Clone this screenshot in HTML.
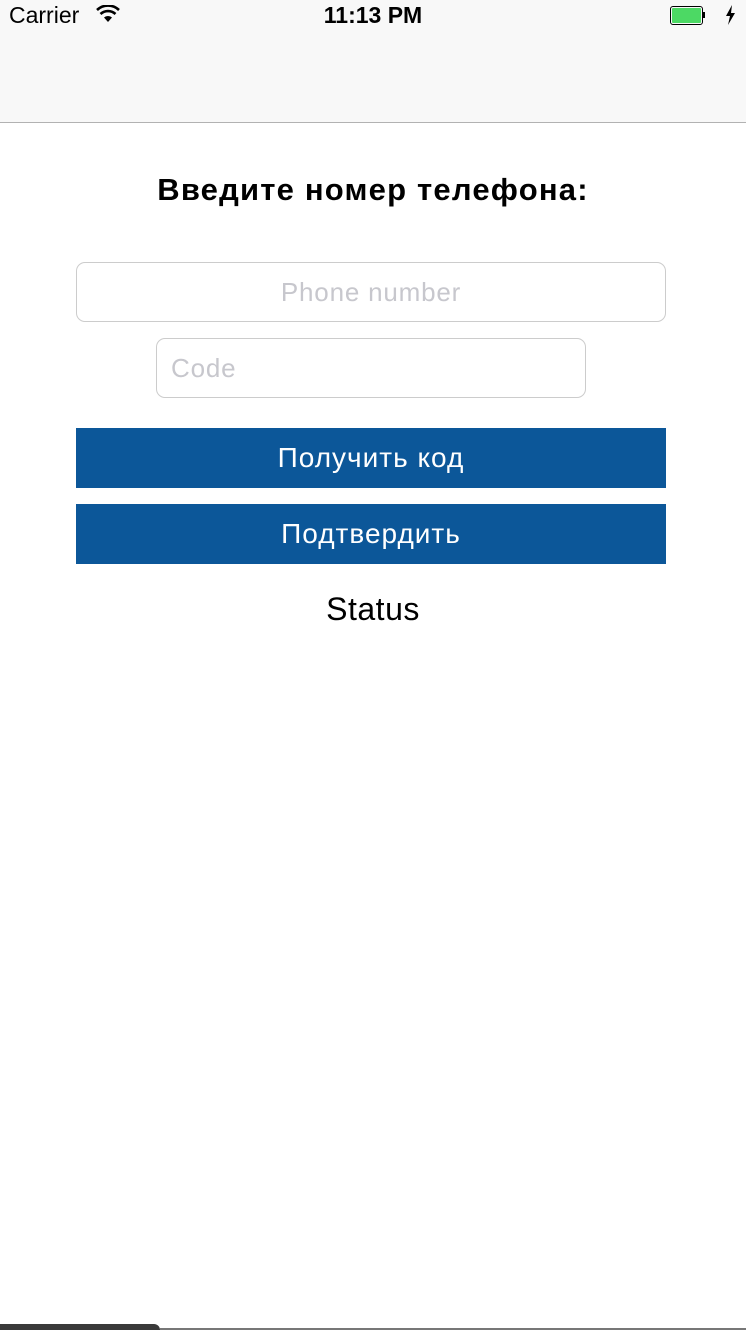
<!DOCTYPE html>
<html><head><meta charset="utf-8"><style>
body{margin:0;width:746px;height:1330px;background:#fff;font-family:"Liberation Sans",sans-serif;position:relative;overflow:hidden}
.nav{position:absolute;left:0;top:0;width:746px;height:122px;background:#f8f8f8;border-bottom:1px solid #b2b2b2}
.abs{position:absolute}
.field{position:absolute;border:1px solid #ccc;border-radius:9px;box-sizing:border-box;color:#c7c7cd;font-size:26px;letter-spacing:0.8px;line-height:58px}
.btn{position:absolute;left:76px;width:590px;height:60px;background:#0c5799;color:#fff;font-size:28px;letter-spacing:1px;line-height:60px;text-align:center}
</style></head><body>
<div class="nav">
<div class="abs" style="left:9px;top:2px;font-size:23px">Carrier</div>
<svg class="abs" style="left:96px;top:5px" width="24" height="18" viewBox="0 0 24 18"><path d="M12 17 L8 12.5 A6 6 0 0 1 16 12.5Z" fill="#000"/><path d="M4.5 9 A11 11 0 0 1 19.5 9" stroke="#000" stroke-width="2.6" fill="none"/><path d="M1 5 A16 16 0 0 1 23 5" stroke="#000" stroke-width="2.6" fill="none"/></svg>
<div class="abs" style="left:0;width:746px;top:2px;text-align:center;font-size:23px;font-weight:bold">11:13 PM</div>
<div class="abs" style="left:670px;top:6px;width:29px;height:15px;border:1px solid #000;border-radius:3px;padding:1px;box-sizing:content-box"><div style="width:29px;height:15px;background:#4cd964;border-radius:1px"></div></div>
<div class="abs" style="left:703px;top:12px;width:2px;height:6px;background:#000"></div>
<svg class="abs" style="left:725px;top:5px" width="11" height="20" viewBox="0 0 11 20"><path d="M7 0 L1 11 H5 L3 20 L10 8 H6 Z" fill="#000"/></svg>
</div>
<div class="abs" style="left:0;width:746px;top:172px;text-align:center;font-size:31px;letter-spacing:1.2px;font-weight:bold">Введите номер телефона:</div>
<div class="field" style="left:76px;top:262px;width:590px;height:60px;text-align:center">Phone number</div>
<div class="field" style="left:156px;top:338px;width:430px;height:60px;padding-left:14px">Code</div>
<div class="btn" style="top:428px">Получить код</div>
<div class="btn" style="top:504px">Подтвердить</div>
<div class="abs" style="left:0;width:746px;top:591px;text-align:center;font-size:32px;letter-spacing:0.5px">Status</div>
<div class="abs" style="left:0;top:1324px;width:160px;height:6px;background:#3a3a3a;border-top-right-radius:6px"></div>
<div class="abs" style="left:160px;top:1328px;width:586px;height:2px;background:#777"></div>
</body></html>
